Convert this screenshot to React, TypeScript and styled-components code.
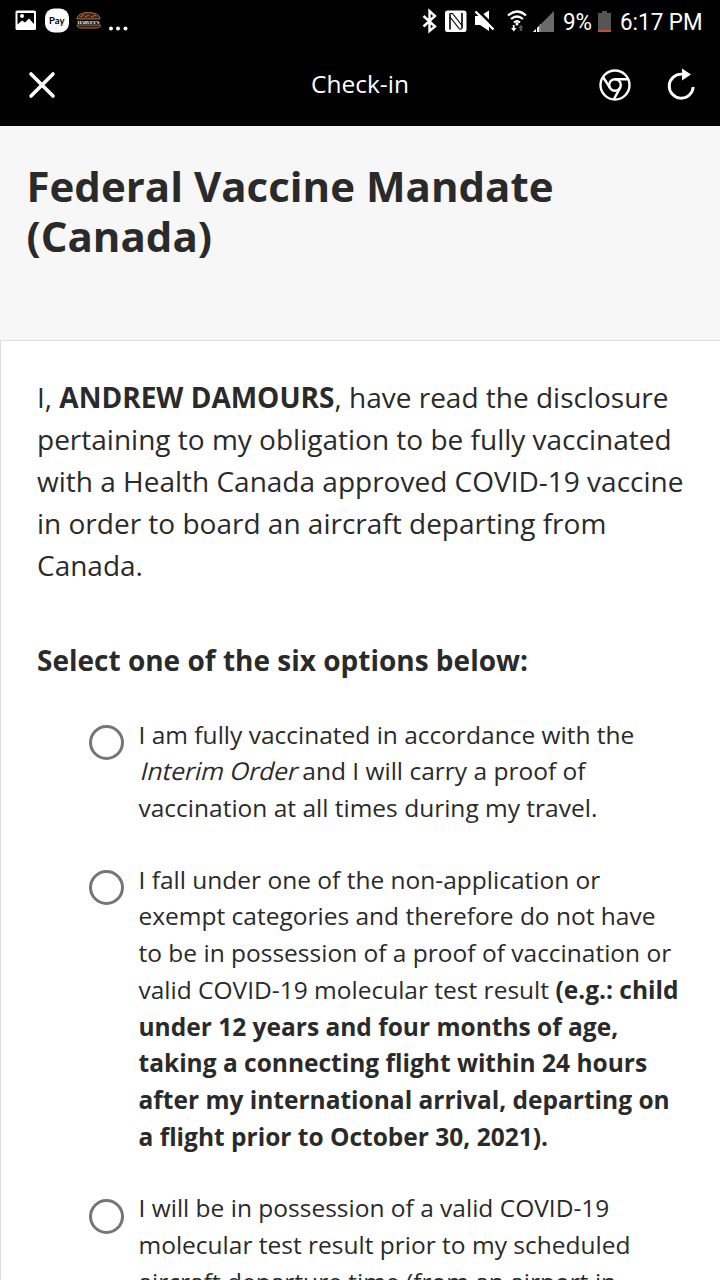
import React from "react";
import styled, { createGlobalStyle } from "styled-components";

const GlobalStyle = createGlobalStyle`
  * { box-sizing: border-box; }
  html, body { margin: 0; height: 1280px; overflow: hidden; background: #fff; }
  body { font-family: "Open Sans", "Noto Sans", sans-serif; color: #2a2a2a; }
`;

const Screen = styled.div`
  display: flex;
  flex-direction: column;
  width: 720px;
  height: 1280px;
  overflow: hidden;
  background: #f7f7f7;
`;

const StatusBar = styled.div`
  display: flex;
  justify-content: space-between;
  height: 43px;
  padding: 0 16px 0 14px;
  background: #000;
  color: #fff;
`;

const StatusClock = styled.div`
  display: flex;
  align-items: center;
  font: 400 24.5px/43px Roboto, sans-serif;
  white-space: nowrap;
`;

const StatusText = styled.span<{ $width: number }>`
  width: ${(p) => p.$width}px;
  transform: scaleX(0.915);
  transform-origin: left center;
`;

const AppBar = styled.header`
  display: grid;
  grid-template-columns: 154px 1fr 154px;
  align-items: center;
  height: 83px;
  background: #000;
  color: #fff;
`;

const AppTitle = styled.div`
  padding-bottom: 2px;
  text-align: center;
  font-size: 24.5px;
  line-height: 34px;
`;

const IconButton = styled.button`
  display: flex;
  padding: 0;
  border: 0;
  background: none;
  color: #fff;
`;

const LeftActions = styled.div`
  display: flex;
  padding-left: 28px;
`;

const RightActions = styled.div`
  display: flex;
  gap: 34px;
  padding-left: 31.5px;
`;

const Hero = styled.section`
  height: 214px;
  padding: 35px 26.5px 0;
`;

const Title = styled.h1`
  margin: 0;
  font-size: 42px;
  line-height: 50px;
  font-weight: 700;
  white-space: nowrap;
`;

const Card = styled.main`
  flex: 1;
  min-height: 0;
  overflow: hidden;
  padding: 35px 0 0 36px;
  border-top: 1px solid #dedede;
  border-left: 1px solid #dedede;
  background: #fff;
`;

const Statement = styled.p`
  margin: 0;
  font-size: 28px;
  line-height: 42px;
`;

const Prompt = styled.h2`
  margin: 53px 0 0;
  font-size: 28px;
  line-height: 42px;
  font-weight: 700;
`;

const Options = styled.div`
  display: flex;
  flex-direction: column;
  gap: 35px;
  margin: 35.6px 0 0 52px;
`;

const Option = styled.label`
  display: flex;
  align-items: flex-start;
  gap: 14.5px;
`;

const Radio = styled.input`
  appearance: none;
  flex: none;
  width: 35px;
  height: 35px;
  margin: 8.2px 0 0;
  border: 3px solid #757575;
  border-radius: 50%;
`;

const OptionText = styled.span`
  font-size: 24.5px;
  line-height: 36.7px;
`;

const Line = styled.span`
  display: block;
  white-space: nowrap;
`;

const Slanted = styled.em`
  display: inline-block;
  font-style: normal;
  transform: skewX(-14deg);
  transform-origin: left 75%;
`;

const NotificationIcons = () => (
  <svg width="120" height="42" viewBox="14 0 120 42">
    <rect x="15.5" y="10.5" width="20.5" height="19.5" rx="1.5" fill="#fff" />
    <path d="M17.500 13h16.500v11l-5-5.500-4 4-3-2-4.500 4z" fill="#000" />
    <circle cx="22" cy="16" r="2" fill="#fff" />
    <rect x="45" y="8.500" width="24" height="24" rx="9" fill="#fff" />
    <text x="56.700" y="23.500" textAnchor="middle" fontFamily="Lato, sans-serif" fontWeight="700" fontSize="9.500" fill="#000">Pay</text>
    <path d="M77 19c0-4 5-6.500 11.500-6.500S100 15 100 19z" fill="#4a2719" stroke="#a96a4a" />
    <path d="M80 17l4-2M85 17l4-2M91 17l5-2" stroke="#a96a4a" strokeWidth="1" />
    <path d="M77 25h23.500c0 2.200-1.500 3-4 3H81c-2.500 0-4-.8-4-3z" fill="#351b12" stroke="#a96a4a" />
    <text x="88.500" y="23.800" textAnchor="middle" fontFamily="Liberation Serif, serif" fontWeight="700" fontSize="5" textLength="22" fill="#fff">HARVEY'S</text>
    <g fill="#fff"><circle cx="111" cy="28.500" r="2" /><circle cx="118" cy="28.500" r="2" /><circle cx="125.500" cy="28.500" r="2" /></g>
  </svg>
);

const SignalIcons = () => (
  <svg width="141" height="42" viewBox="422 0 141 42">
    <path d="M423.500 15l11.500 10.500-5.500 4.500V10l5.500 5-11.500 10.500" fill="none" stroke="#fff" strokeWidth="2.400" />
    <rect x="445" y="9.500" width="21.500" height="21.500" rx="2.500" fill="#fff" />
    <path d="M450 28.500V12.500M462 12v15.500" fill="none" stroke="#000" strokeWidth="1.600" />
    <path d="M450 12.500h2.500l9.500 12M450 16l9.500 12h2.500" fill="none" stroke="#000" strokeWidth="1.200" />
    <path d="M475 15h5l9-5.500v20.500l-9-6h-5z" fill="#fff" />
    <path d="M477.500 9l17 17" stroke="#000" strokeWidth="2.500" />
    <path d="M475.500 10.500l18 18" stroke="#fff" strokeWidth="2.400" />
    <g fill="none" stroke="#fff" strokeWidth="2.200">
      <path d="M508 14.500q9-8 18 0M511 18q6-5 12 0M514 21.500q3-2.500 6 0" />
    </g>
    <circle cx="517" cy="23" r="1.500" fill="#fff" />
    <path d="M511 27h1.800V24h1.800v3h1.900l-2.700 3.500z" fill="#fff" />
    <path d="M518.200 27l2.600-3.500 2.600 3.500H522v3h-2.200v-3z" fill="#555" />
    <path d="M533 31L554 10v21z" fill="#6b6b6b" />
    <path d="M533 31l8-8v8z" fill="#fff" />
    <path d="M536.500 27v4M540 24v7" stroke="#000" />
  </svg>
);

const BatteryIcon = () => (
  <svg width="22" height="42" viewBox="598 0 22 42">
    <path d="M598 12h4v-2h5v2h4v19h-13z" fill="#555" />
    <path d="M598 29h13v2h-13z" fill="#c84c3d" />
  </svg>
);

const CloseIcon = () => (
  <svg width="28" height="28" viewBox="28 71 28 28">
    <path d="M31 74l22 22M53 74L31 96" stroke="#fff" strokeWidth="3.600" strokeLinecap="round" />
  </svg>
);

const ChromeIcon = () => (
  <svg width="34" height="34" viewBox="597.500 67.500 34 34" fill="none" stroke="#fff" strokeWidth="2.400">
    <circle cx="614.500" cy="84.500" r="14.500" />
    <circle cx="614.500" cy="84.500" r="5.800" />
    <path d="M614.500 78.700H627.700M609.500 87.400L602.500 76.500M619.500 87.400L613.500 98.500" />
  </svg>
);

const ReloadIcon = () => (
  <svg width="30" height="34" viewBox="665 68 30 34">
    <path d="M681 74.200A12 12 0 1 0 692.200 87" fill="none" stroke="#fff" strokeWidth="2.900" />
    <path d="M681 68.500l9 6-9 6z" fill="#fff" />
  </svg>
);

const Choice = ({ children }: { children: React.ReactNode }) => (
  <Option>
    <Radio type="radio" name="vaccine-status" />
    <OptionText>{children}</OptionText>
  </Option>
);

export default function App() {
  return (
    <Screen>
      <GlobalStyle />
      <StatusBar>
        <NotificationIcons />
        <StatusClock>
          <SignalIcons />
          <StatusText $width={35}>9%</StatusText>
          <BatteryIcon />
          <StatusText $width={84}>6:17 PM</StatusText>
        </StatusClock>
      </StatusBar>
      <AppBar>
        <LeftActions>
          <IconButton aria-label="Close"><CloseIcon /></IconButton>
        </LeftActions>
        <AppTitle>Check-in</AppTitle>
        <RightActions>
          <IconButton aria-label="Open in browser"><ChromeIcon /></IconButton>
          <IconButton aria-label="Reload"><ReloadIcon /></IconButton>
        </RightActions>
      </AppBar>
      <Hero>
        <Title>
          <Line>Federal Vaccine Mandate</Line>
          <Line>(Canada)</Line>
        </Title>
      </Hero>
      <Card>
        <Statement>
          <Line>I, <b>ANDREW DAMOURS</b>, have read the disclosure</Line>
          <Line>pertaining to my obligation to be fully vaccinated</Line>
          <Line>with a Health Canada approved COVID-19 vaccine</Line>
          <Line>in order to board an aircraft departing from</Line>
          <Line>Canada.</Line>
        </Statement>
        <Prompt>Select one of the six options below:</Prompt>
        <Options>
          <Choice>
            <Line>I am fully vaccinated in accordance with the</Line>
            <Line><Slanted>Interim Order</Slanted> and I will carry a proof of</Line>
            <Line>vaccination at all times during my travel.</Line>
          </Choice>
          <Choice>
            <Line>I fall under one of the non-application or</Line>
            <Line>exempt categories and therefore do not have</Line>
            <Line>to be in possession of a proof of vaccination or</Line>
            <Line>valid COVID-19 molecular test result <b>(e.g.: child</b></Line>
            <Line><b>under 12 years and four months of age,</b></Line>
            <Line><b>taking a connecting flight within 24 hours</b></Line>
            <Line><b>after my international arrival, departing on</b></Line>
            <Line><b>a flight prior to October 30, 2021).</b></Line>
          </Choice>
          <Choice>
            <Line>I will be in possession of a valid COVID-19</Line>
            <Line>molecular test result prior to my scheduled</Line>
            <Line>aircraft departure time (from an airport in</Line>
          </Choice>
        </Options>
      </Card>
    </Screen>
  );
}
